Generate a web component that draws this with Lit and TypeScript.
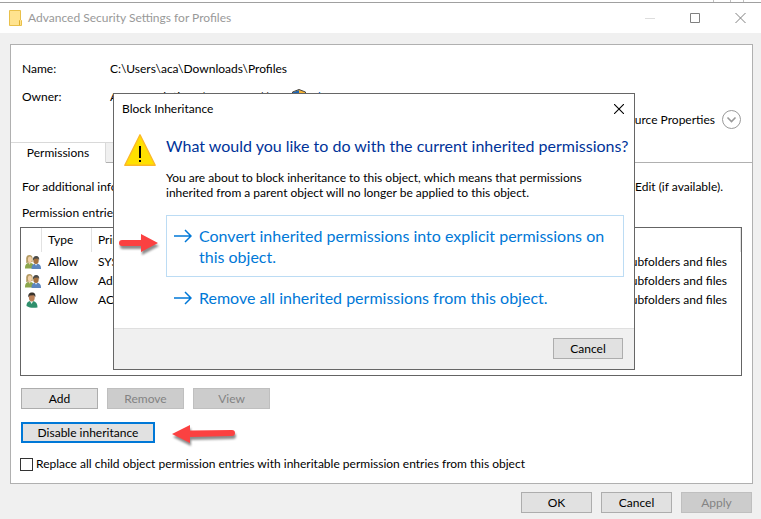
import { LitElement, html, css, svg } from "lit";
import { customElement, state } from "lit/decorators.js";

interface Entry {
  icon: "group" | "user";
  type: string;
  principal: string;
  applies: string;
}

const entries: Entry[] = [
  { icon: "group", type: "Allow", principal: "SYSTEM", applies: "This folder, subfolders and files" },
  { icon: "group", type: "Allow", principal: "Administrators", applies: "This folder, subfolders and files" },
  { icon: "user", type: "Allow", principal: "ACA", applies: "This folder, subfolders and files" },
];

const groupIcon = svg`
  <svg width="16" height="14" viewBox="0 0 16 14" aria-hidden="true">
    <path d="M0 13.500c0-3.600 1-5.500 4.500-5.500s5 2 5 5.500z" fill="#8ca64c"/>
    <path d="M3.200 7.500 4.500 9.800 6.200 7.500z" fill="#e8c9a0"/>
    <path d="M1.200 8V3.500C1.200 1 2.600 0 4.500 0S7.600 1.200 7.600 3.500V7z" fill="#b39a62"/>
    <ellipse cx="4.900" cy="4.600" rx="2" ry="3" fill="#f0cfa6"/>
    <path d="M6.500 14c0-3.600 1.200-5.200 4.700-5.200S16 10.400 16 14z" fill="#5d86bf"/>
    <path d="M9.600 8.500 11 10.800 12.600 8.500z" fill="#dfe8f2"/>
    <ellipse cx="11" cy="5.600" rx="2.700" ry="3.500" fill="#a5713f"/>
    <path d="M8 5.500C7.600 2.500 9 1 11.200 1s3.500 1.700 2.900 4.200L13 3.600 9.500 3.800z" fill="#4a4a48"/>
  </svg>`;

const userIcon = svg`
  <svg width="14" height="16" viewBox="0 0 14 16" aria-hidden="true">
    <path d="M1.500 14c0-3.500 1.500-5 5-5s6 1.500 6 6.500c-4 .500-8 .500-11-1.500z" fill="#2f8f6c"/>
    <path d="M4.800 8.800 6.500 12l2-3.200z" fill="#e9f3ee"/>
    <ellipse cx="6.800" cy="5.600" rx="2.900" ry="3.900" fill="#b98058"/>
    <path d="M3.400 5.300C2.800 2 4.400.400 7 .400s4 1.800 3.200 4.900L9 3.300l-4.200.200z" fill="#3a332c"/>
  </svg>`;

const optionArrow = svg`
  <svg class="go" width="18" height="14" viewBox="0 0 18 14" aria-hidden="true">
    <path d="M0 7h17M11 1l6 6-6 6" fill="none" stroke="#0078d7" stroke-width="1.500"/>
  </svg>`;

@customElement("app-root")
export class AppRoot extends LitElement {
  @state() private open = true;

  static styles = css`
    :host {
      display: flex;
      flex-direction: column;
      position: relative;
      min-height: 100vh;
      box-sizing: border-box;
      background: #f0f0f0;
      color: #000;
      font-family: Lato, "Open Sans", sans-serif;
      font-size: 12px;
      line-height: 16px;
      white-space: nowrap;
    }
    *, *::before, *::after { box-sizing: border-box; }
    h1, h2, p { margin: 0; font-size: inherit; font-weight: 400; }
    button { font: inherit; color: inherit; padding: 0; margin: 0; }
    svg { display: block; flex: none; }

    .behind {
      height: 3px;
      background: #fff;
      border-bottom: 1px solid #a0a0a0;
      display: flex;
      justify-content: flex-end;
      padding-right: 17px;
    }
    .tick { width: 1px; background: #c0c0c0; margin-left: 12px; }
    .tick.first { margin-right: 4px; }

    .titlebar {
      height: 30px;
      background: #fff;
      color: #999;
      display: flex;
      align-items: center;
      padding: 0 15px 0 9px;
      gap: 6px;
    }
    .titlebar h1 { flex: 1; }
    .window-controls { display: flex; gap: 35px; }
    .plain { border: 0; background: none; display: block; }

    .panel {
      flex: 1;
      display: flex;
      flex-direction: column;
      margin: 11px 8px 0 10px;
      background: #fff;
      border: 1px solid #b0b0b0;
    }
    .facts { padding: 10px 11px 0; margin: 0; }
    .fact { display: flex; height: 28px; align-items: center; }
    .fact dt { width: 88px; }
    .fact dd { margin: 0; display: flex; align-items: center; }
    .owner { width: 170px; }
    .fact svg { margin: 0 4px 0 12px; }
    a { color: #0066cc; text-decoration: none; }
    .resource {
      display: flex;
      align-items: center;
      justify-content: flex-end;
      gap: 7px;
      height: 18px;
      padding-right: 10px;
    }

    .tabs { display: flex; height: 21px; margin-top: 13px; }
    .tab {
      border: 1px solid #d9d9d9;
      border-bottom-color: #b0b0b0;
      border-left: 0;
      background: #f0f0f0;
      padding: 0 16px;
    }
    .tab.current { width: 95px; background: #fff; border-bottom-color: #fff; padding: 0; }
    .tab-rest { flex: 1; border-bottom: 1px solid #b0b0b0; }

    .page { flex: 1; display: flex; flex-direction: column; padding: 16px 10px 11px 9px; }
    .hint { display: flex; justify-content: space-between; padding: 0 19px 0 2px; }
    .list-label { padding: 10px 2px 6px; }
    .list { flex: 1; border: 1px solid #646464; }
    table { width: 100%; border-collapse: separate; border-spacing: 0; table-layout: fixed; }
    th, td { padding: 0 0 0 6px; text-align: left; font-weight: 400; overflow: hidden; }
    th { height: 24px; border-right: 1px solid #e2e2e2; }
    td { height: 19px; }
    .c-icon { width: 21px; }
    .c-type { width: 50px; }
    .c-applies { width: 220px; }
    td.icon { padding: 0 0 0 4px; }
    td.applies { text-align: right; padding-right: 14px; }

    .row { display: flex; gap: 9px; padding-left: 1px; }
    .first-row { margin: 12px 0 13px; }
    .btn {
      height: 21px;
      border: 1px solid #adadad;
      background: #e1e1e1;
      width: 77px;
      line-height: 19px;
    }
    .btn:disabled { background: #ccc; border-color: #bfbfbf; color: #838383; }
    .btn.wide { width: 134px; border: 2px solid #0078d7; line-height: 17px; }
    .btn.std { width: 71px; }
    .check { display: flex; align-items: center; gap: 3px; margin-top: 13px; height: 16px; }
    .check input {
      appearance: none;
      width: 13px;
      height: 13px;
      margin: 0;
      border: 1px solid #333;
      background: #fff;
    }

    .footer { display: flex; justify-content: flex-end; gap: 9px; padding: 8px 9px 6px; }

    .dialog {
      position: absolute;
      left: 113px;
      top: 93px;
      width: 522px;
      background: #fff;
      border: 1px solid #666;
    }
    .dialog-title {
      display: flex;
      align-items: center;
      justify-content: space-between;
      height: 29px;
      padding: 0 10px 0 8px;
    }
    .dialog-body { display: flex; gap: 10px; padding: 11px 10px 10px; }
    .dialog-text { flex: 1; min-width: 0; }
    .dialog h2, .option { font-size: 16px; }
    .dialog h2 { line-height: 24px; color: #003399; }
    .dialog-text p { line-height: 15px; margin: 12px 0 15px; }
    .option {
      display: flex;
      align-items: flex-start;
      gap: 7px;
      width: 100%;
      padding: 9px 7px;
      border: 1px solid transparent;
      background: none;
      color: #0078d7;
      line-height: 21px;
      text-align: left;
    }
    .option.focus { border-color: #bcdcf4; }
    .go { margin-top: 4px; }
    .dialog-footer {
      display: flex;
      justify-content: flex-end;
      padding: 9px 11px 10px;
      background: #f0f0f0;
      border-top: 1px solid #dfdfdf;
    }
    .btn.small { width: 70px; }

    .pointer { position: absolute; overflow: visible; filter: drop-shadow(1px 3px 1px rgba(0, 0, 0, 0.45)); }
    .pointer-option { left: 119px; top: 234px; }
    .pointer-disable { left: 172px; top: 425px; }
  `;

  private renderDialog() {
    return html`
      <section class="dialog" role="dialog" aria-labelledby="dialog-title">
        <div class="dialog-title">
          <span id="dialog-title">Block Inheritance</span>
          <button class="plain" aria-label="Close" @click=${() => (this.open = false)}>
            <svg width="10" height="10" viewBox="0 0 10 10"><path d="M0 0l10 10M10 0L0 10" stroke="#000" stroke-width="1.100"/></svg>
          </button>
        </div>
        <div class="dialog-body">
          <svg class="warn" width="32" height="32" viewBox="0 0 32 32" aria-hidden="true">
            <path d="M16 0.800 31.200 31.200H0.800z" fill="#ffe000" stroke="#fcb827" stroke-width="1.400" stroke-linejoin="round"/>
            <path d="M15 12h2v12h-2zM15 26h2v2h-2z" fill="#000"/>
          </svg>
          <div class="dialog-text">
            <h2>What would you like to do with the current inherited permissions?</h2>
            <p>You are about to block inheritance to this object, which means that permissions<br />inherited from a parent object will no longer be applied to this object.</p>
            <button class="option focus">${optionArrow}<span>Convert inherited permissions into explicit permissions on<br />this object.</span></button>
            <button class="option">${optionArrow}<span>Remove all inherited permissions from this object.</span></button>
          </div>
        </div>
        <div class="dialog-footer"><button class="btn small" @click=${() => (this.open = false)}>Cancel</button></div>
      </section>`;
  }

  render() {
    return html`
      <div class="behind"><i class="tick first"></i><i class="tick"></i><i class="tick"></i></div>
      <header class="titlebar">
        <svg width="13" height="16" viewBox="0 0 13 16" aria-hidden="true">
          <path d="M.500.500h11v9l1 1v5H.500z" fill="#ffe38f" stroke="#e9c04a"/>
          <path d="M10.500 15v-4.500l1-1" fill="none" stroke="#e0b030"/>
        </svg>
        <h1>Advanced Security Settings for Profiles</h1>
        <div class="window-controls">
          <button class="plain" aria-label="Minimize"><svg width="10" height="10"><path d="M0 5.500h10" stroke="#ddd"/></svg></button>
          <button class="plain" aria-label="Maximize"><svg width="10" height="10"><path d="M.500.500h9v9h-9z" fill="none" stroke="#808080"/></svg></button>
          <button class="plain" aria-label="Close"><svg width="11" height="10"><path d="M.500 0l10 10M10.500 0l-10 10" stroke="#808080"/></svg></button>
        </div>
      </header>

      <main class="panel">
        <dl class="facts">
          <div class="fact"><dt>Name:</dt><dd>C:\\Users\\aca\\Downloads\\Profiles</dd></div>
          <div class="fact">
            <dt>Owner:</dt>
            <dd>
              <span class="owner">ACA IT Solutions (ACAGroup\\)</span>
              <svg width="14" height="16" viewBox="0 0 14 16" aria-hidden="true">
                <path d="M7 .500 13.500 3v5c0 3.500-3 6-6.500 7.500C3.500 14 .500 11.500.500 8V3z" fill="#f5b335" stroke="#444"/>
                <path d="M7 1.200V8H1V3.300zM7 8h6c-.200 3-3 5.500-6 7z" fill="#1d64b4"/>
              </svg>
              <a href="#change">Change</a>
            </dd>
          </div>
        </dl>
        <div class="resource">
          <span id="resource-label">Resource Properties</span>
          <button class="plain" aria-labelledby="resource-label">
            <svg width="20" height="20" viewBox="0 0 20 20"><circle cx="9.500" cy="9.500" r="9" fill="#fff" stroke="#999"/><path d="M5.500 7.500l4 4 4-4" fill="none" stroke="#999" stroke-width="1.600"/></svg>
          </button>
        </div>

        <div class="tabs" role="tablist">
          <button class="tab current" role="tab" aria-selected="true">Permissions</button>
          <button class="tab" role="tab" aria-selected="false">Auditing</button>
          <span class="tab-rest"></span>
        </div>

        <div class="page">
          <p class="hint">
            <span>For additional information, double-click an entry.</span>
            <span>To modify it, click Edit (if available).</span>
          </p>
          <p class="list-label">Permission entries:</p>
          <div class="list">
            <table>
              <thead>
                <tr>
                  <th class="c-icon"></th>
                  <th class="c-type">Type</th>
                  <th>Principal</th>
                  <th class="c-applies">Applies to</th>
                </tr>
              </thead>
              <tbody>
                ${entries.map(
                  (e) => html`<tr>
                    <td class="icon">${e.icon === "group" ? groupIcon : userIcon}</td>
                    <td>${e.type}</td>
                    <td>${e.principal}</td>
                    <td class="applies">${e.applies}</td>
                  </tr>`
                )}
              </tbody>
            </table>
          </div>
          <div class="row first-row">
            <button class="btn">Add</button>
            <button class="btn" disabled>Remove</button>
            <button class="btn" disabled>View</button>
          </div>
          <div class="row">
            <button class="btn wide" @click=${() => (this.open = true)}>Disable inheritance</button>
          </div>
          <label class="check"><input type="checkbox" />Replace all child object permission entries with inheritable permission entries from this object</label>
        </div>
      </main>

      <footer class="footer">
        <button class="btn std">OK</button>
        <button class="btn std">Cancel</button>
        <button class="btn std" disabled>Apply</button>
      </footer>

      ${this.open ? this.renderDialog() : null}

      <svg class="pointer pointer-option" width="39" height="18" viewBox="0 0 39 18" aria-hidden="true">
        <path d="M3 6 22 6V0l17 9-17 9v-6L3 12A3 3 0 0 1 3 6z" fill="#fb4141"/>
      </svg>
      <svg class="pointer pointer-disable" width="63" height="18" viewBox="0 0 63 18" aria-hidden="true">
        <path d="M0 9 18 0v5.500l42-.500a3 3 0 0 1 0 6L18 12v6z" fill="#fb4141"/>
      </svg>
    `;
  }
}
